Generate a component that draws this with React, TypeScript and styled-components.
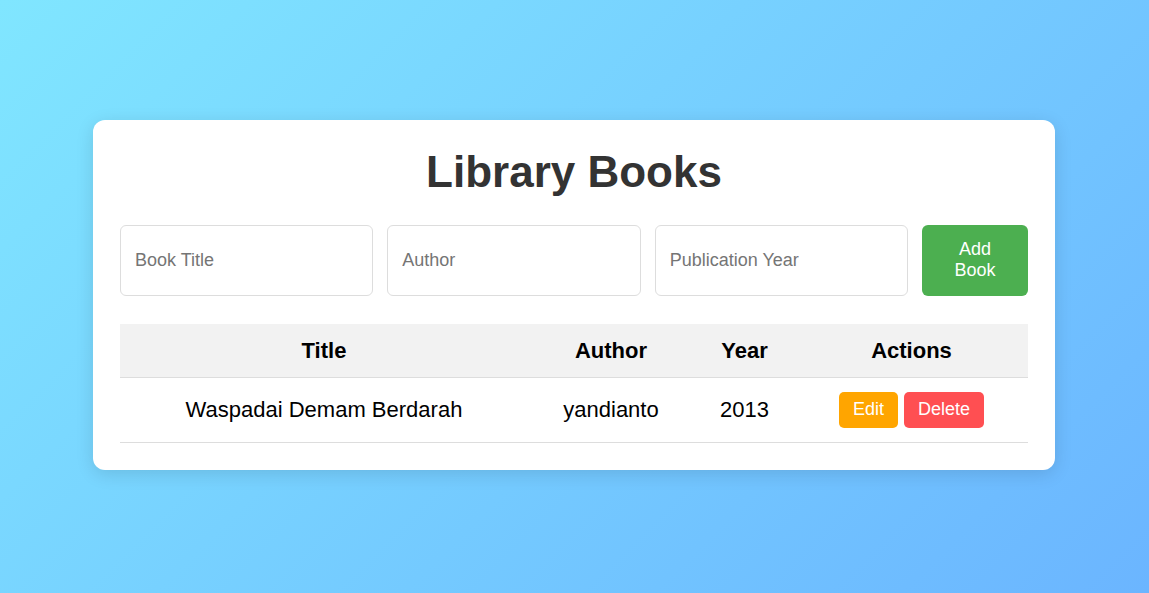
import React from "react";
import styled, { createGlobalStyle } from "styled-components";

const GlobalStyle = createGlobalStyle`
  * { box-sizing: border-box; }
  html, body { margin: 0; padding: 0; }
  body {
    font-family: "Liberation Sans", Arial, sans-serif;
    background: linear-gradient(135deg, #80e6ff 0%, #6bb5ff 100%);
    min-height: 100vh;
  }
`;

const Page = styled.div`
  min-height: 100vh;
  padding: 0 1px 4px 0;
  display: flex;
  align-items: center;
  justify-content: center;
`;

const Card = styled.div`
  width: 962px;
  background: #fff;
  border-radius: 12px;
  padding: 27px;
  box-shadow: 0 4px 18px rgba(0, 0, 0, 0.12);
`;

const Title = styled.h1`
  margin: 0 0 29px;
  text-align: center;
  font-size: 44px;
  font-weight: bold;
  color: #333;
  line-height: 49px;
`;

const Form = styled.div`
  display: flex;
  gap: 14px;
  margin-bottom: 28px;
`;

const Input = styled.input`
  flex: 1;
  min-width: 0;
  height: 71px;
  padding: 0 14px;
  font-family: inherit;
  font-size: 18px;
  border: 1px solid #ddd;
  border-radius: 6px;
  outline: none;
  &::placeholder { color: #757575; }
`;

const AddButton = styled.button`
  width: 106px;
  height: 71px;
  flex: none;
  background: #4caf50;
  color: #fff;
  border: none;
  border-radius: 6px;
  font-family: inherit;
  font-size: 18px;
  line-height: 21px;
  padding: 0 20px;
  cursor: pointer;
`;

const Table = styled.table`
  width: 100%;
  border-collapse: collapse;
  table-layout: fixed;
  font-size: 22px;
`;

const Th = styled.th`
  background: #f2f2f2;
  padding: 14px 8px;
  line-height: 25px;
  font-weight: bold;
  color: #000;
  text-align: center;
  border-bottom: 1px solid #ddd;
`;

const Td = styled.td`
  padding: 14px 8px;
  line-height: 36px;
  color: #000;
  text-align: center;
  border-bottom: 1px solid #ddd;
`;

const Actions = styled.div`
  display: flex;
  justify-content: center;
  gap: 6px;
`;

const ActionButton = styled.button<{ $variant: "edit" | "delete" }>`
  height: 36px;
  padding: 0 14px;
  border: none;
  border-radius: 5px;
  font-family: inherit;
  font-size: 18px;
  color: #fff;
  background: ${(p) => (p.$variant === "edit" ? "#ffa500" : "#ff4f52")};
  cursor: pointer;
`;

const books = [{ title: "Waspadai Demam Berdarah", author: "yandianto", year: 2013 }];

export default function App() {
  return (
    <>
      <GlobalStyle />
      <Page>
        <Card>
          <Title>Library Books</Title>
          <Form>
            <Input placeholder="Book Title" />
            <Input placeholder="Author" />
            <Input placeholder="Publication Year" />
            <AddButton>Add Book</AddButton>
          </Form>
          <Table>
            <colgroup>
              <col style={{ width: 408 }} />
              <col style={{ width: 166 }} />
              <col style={{ width: 101 }} />
              <col style={{ width: 233 }} />
            </colgroup>
            <thead>
              <tr>
                <Th>Title</Th>
                <Th>Author</Th>
                <Th>Year</Th>
                <Th>Actions</Th>
              </tr>
            </thead>
            <tbody>
              {books.map((b) => (
                <tr key={b.title}>
                  <Td>{b.title}</Td>
                  <Td>{b.author}</Td>
                  <Td>{b.year}</Td>
                  <Td>
                    <Actions>
                      <ActionButton $variant="edit">Edit</ActionButton>
                      <ActionButton $variant="delete">Delete</ActionButton>
                    </Actions>
                  </Td>
                </tr>
              ))}
            </tbody>
          </Table>
        </Card>
      </Page>
    </>
  );
}
